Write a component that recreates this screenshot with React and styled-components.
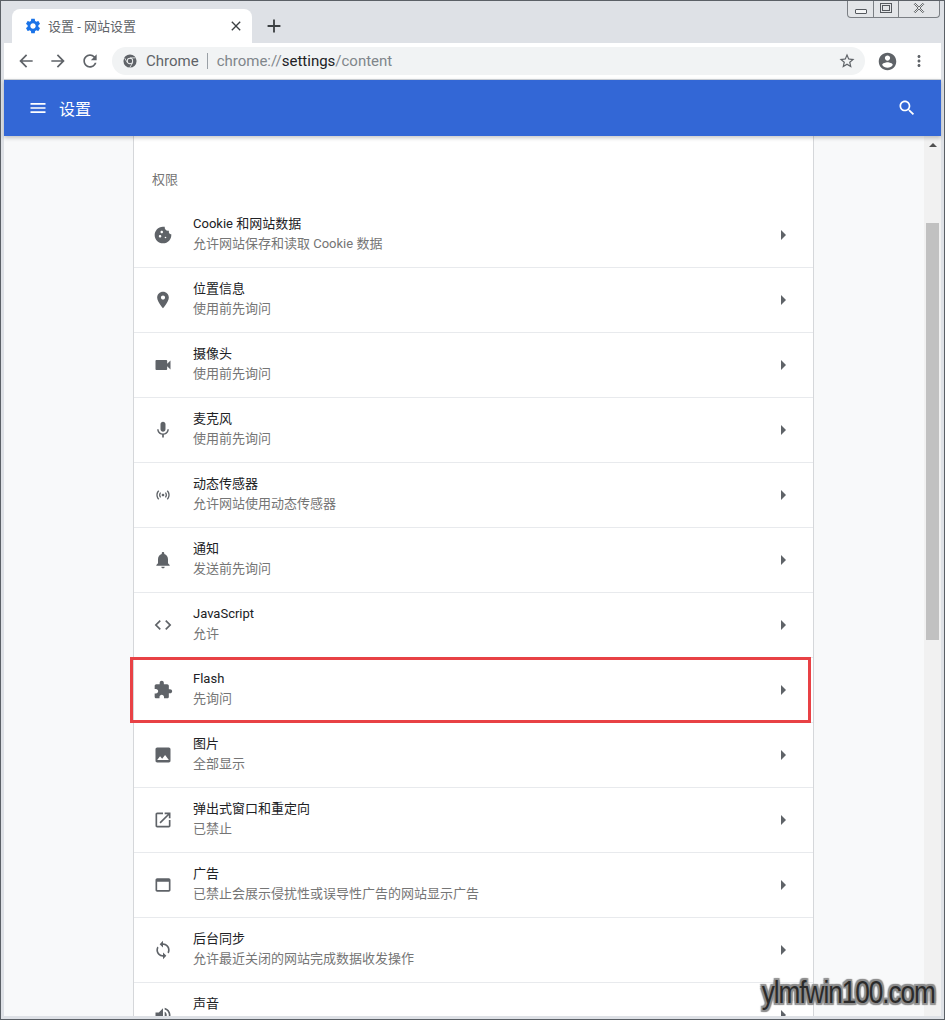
import styled, { createGlobalStyle } from 'styled-components';

const GlobalStyle = createGlobalStyle`
    html, body {
        margin: 0;
        padding: 0;
        background: #ffffff;
    }

    * {
        box-sizing: border-box;
    }
`;

const FONT = `Roboto, "Noto Sans CJK SC", "Liberation Sans", sans-serif`;

const ICONS = {
    gear: 'M19.14 12.94c.04-.3.06-.61.06-.94 0-.32-.02-.64-.07-.94l2.03-1.58c.18-.14.23-.41.12-.61l-1.92-3.32c-.12-.22-.37-.29-.59-.22l-2.39.96c-.5-.38-1.03-.7-1.62-.94l-.36-2.54c-.04-.24-.24-.41-.48-.41h-3.84c-.24 0-.43.17-.47.41l-.36 2.54c-.59.24-1.13.57-1.62.94l-2.39-.96c-.22-.08-.47 0-.59.22L2.74 8.87c-.12.21-.08.47.12.61l2.03 1.58c-.05.3-.09.63-.09.94s.02.64.07.94l-2.03 1.58c-.18.14-.23.41-.12.61l1.92 3.32c.12.22.37.29.59.22l2.39-.96c.5.38 1.03.7 1.62.94l.36 2.54c.05.24.24.41.48.41h3.84c.24 0 .44-.17.47-.41l.36-2.54c.59-.24 1.13-.56 1.62-.94l2.39.96c.22.08.47 0 .59-.22l1.92-3.32c.12-.22.07-.47-.12-.61l-2.01-1.58zM12 15.6c-1.98 0-3.6-1.62-3.6-3.6s1.62-3.6 3.6-3.6 3.6 1.62 3.6 3.6-1.62 3.6-3.6 3.6z',
    close: 'M19 6.41L17.59 5 12 10.59 6.41 5 5 6.41 10.59 12 5 17.59 6.41 19 12 13.41 17.59 19 19 17.59 13.41 12z',
    add: 'M19 13h-6v6h-2v-6H5v-2h6V5h2v6h6v2z',
    back: 'M20 11H7.83l5.59-5.59L12 4l-8 8 8 8 1.41-1.41L7.83 13H20v-2z',
    forward: 'M12 4l-1.41 1.41L16.17 11H4v2h12.17l-5.58 5.59L12 20l8-8z',
    reload: 'M17.65 6.35C16.2 4.9 14.21 4 12 4c-4.42 0-7.99 3.58-7.99 8s3.57 8 7.99 8c3.73 0 6.84-2.55 7.73-6h-2.08c-.82 2.33-3.04 4-5.65 4-3.31 0-6-2.69-6-6s2.69-6 6-6c1.66 0 3.14.69 4.22 1.78L13 11h7V4l-2.35 2.35z',
    star: 'M22 9.24l-7.19-.62L12 2 9.19 8.63 2 9.24l5.46 4.73L5.82 21 12 17.27 18.18 21l-1.63-7.03L22 9.24zM12 15.4l-3.76 2.27 1-4.28-3.32-2.88 4.38-.38L12 6.1l1.71 4.04 4.38.38-3.32 2.88 1 4.28L12 15.4z',
    account: 'M12 2C6.48 2 2 6.48 2 12s4.48 10 10 10 10-4.48 10-10S17.52 2 12 2zm0 3c1.66 0 3 1.34 3 3s-1.34 3-3 3-3-1.34-3-3 1.34-3 3-3zm0 14.2c-2.5 0-4.71-1.28-6-3.22.03-1.99 4-3.08 6-3.08 1.99 0 5.97 1.09 6 3.08-1.29 1.94-3.5 3.22-6 3.22z',
    more: 'M12 8c1.1 0 2-.9 2-2s-.9-2-2-2-2 .9-2 2 .9 2 2 2zm0 2c-1.1 0-2 .9-2 2s.9 2 2 2 2-.9 2-2-.9-2-2-2zm0 6c-1.1 0-2 .9-2 2s.9 2 2 2 2-.9 2-2-.9-2-2-2z',
    menu: 'M3 18h18v-2H3v2zm0-5h18v-2H3v2zm0-7v2h18V6H3z',
    search: 'M15.5 14h-.79l-.28-.27C15.41 12.59 16 11.11 16 9.5 16 5.91 13.09 3 9.5 3S3 5.91 3 9.5 5.91 16 9.5 16c1.61 0 3.09-.59 4.23-1.57l.27.28v.79l5 4.99L20.49 19l-4.99-5zm-6 0C7.01 14 5 11.99 5 9.5S7.01 5 9.5 5 14 7.01 14 9.5 11.99 14 9.5 14z',
    arrow: 'M10 17l5-5-5-5v10z',
    cookie: 'M21.95 10.99c-1.79-.03-3.7-1.95-2.68-4.22-2.97 1-5.78-1.59-5.19-4.56C7.11.74 2 6.41 2 12c0 5.52 4.48 10 10 10 5.89 0 10.54-5.08 9.95-11.01zM8.5 15c-.83 0-1.5-.67-1.5-1.5S7.67 12 8.5 12s1.5.67 1.5 1.5S9.33 15 8.5 15zm2-5C9.67 10 9 9.33 9 8.5S9.67 7 10.5 7s1.5.67 1.5 1.5-.67 1.5-1.5 1.5zm4.5 6c-.55 0-1-.45-1-1s.45-1 1-1 1 .45 1 1-.45 1-1 1z',
    location: 'M12 2C8.13 2 5 5.13 5 9c0 5.25 7 13 7 13s7-7.75 7-13c0-3.87-3.13-7-7-7zm0 9.5c-1.38 0-2.5-1.12-2.5-2.5s1.12-2.5 2.5-2.5 2.5 1.12 2.5 2.5-1.12 2.5-2.5 2.5z',
    camera: 'M17 10.5V7c0-.55-.45-1-1-1H4c-.55 0-1 .45-1 1v10c0 .55.45 1 1 1h12c.55 0 1-.45 1-1v-3.5l4 4v-11l-4 4z',
    mic: 'M12 14c1.66 0 2.99-1.34 2.99-3L15 5c0-1.66-1.34-3-3-3S9 3.34 9 5v6c0 1.66 1.34 3 3 3zm5.3-3c0 3-2.54 5.1-5.3 5.1S6.7 14 6.7 11H5c0 3.41 2.72 6.23 6 6.72V21h2v-3.28c3.28-.48 6-3.3 6-6.72h-1.7z',
    sensors: 'M7.76 16.24C6.67 15.16 6 13.66 6 12s.67-3.16 1.76-4.24l1.42 1.42C8.45 9.9 8 10.9 8 12c0 1.1.45 2.1 1.17 2.83l-1.41 1.41zm8.48 0C17.33 15.16 18 13.66 18 12s-.67-3.16-1.76-4.24l-1.42 1.42C15.55 9.9 16 10.9 16 12c0 1.1-.45 2.1-1.17 2.83l1.41 1.41zM12 10c-1.1 0-2 .9-2 2s.9 2 2 2 2-.9 2-2-.9-2-2-2zm8 2c0 2.21-.9 4.21-2.35 5.65l1.42 1.42C20.88 17.26 22 14.76 22 12s-1.12-5.26-2.93-7.07l-1.42 1.42C19.1 7.79 20 9.79 20 12zM6.35 6.35L4.93 4.93C3.12 6.74 2 9.24 2 12s1.12 5.26 2.93 7.07l1.42-1.42C4.9 16.21 4 14.21 4 12s.9-4.21 2.35-5.65z',
    bell: 'M12 22c1.1 0 2-.9 2-2h-4c0 1.1.89 2 2 2zm6-6v-5c0-3.07-1.64-5.64-4.5-6.32V4c0-.83-.67-1.5-1.5-1.5s-1.5.67-1.5 1.5v.68C7.63 5.36 6 7.92 6 11v5l-2 2v1h16v-1l-2-2z',
    code: 'M9.4 16.6L4.8 12l4.6-4.6L8 6l-6 6 6 6 1.4-1.4zm5.2 0l4.6-4.6-4.6-4.6L16 6l6 6-6 6-1.4-1.4z',
    puzzle: 'M20.5 11H19V7c0-1.1-.9-2-2-2h-4V3.5C13 2.12 11.88 1 10.5 1S8 2.12 8 3.5V5H4c-1.1 0-1.99.9-1.99 2v3.8H3.5c1.49 0 2.7 1.21 2.7 2.7s-1.21 2.7-2.7 2.7H2V20c0 1.1.9 2 2 2h3.8v-1.5c0-1.49 1.21-2.7 2.7-2.7 1.49 0 2.7 1.21 2.7 2.7V22H17c1.1 0 2-.9 2-2v-4h1.5c1.38 0 2.5-1.12 2.5-2.5S21.88 11 20.5 11z',
    photo: 'M21 19V5c0-1.1-.9-2-2-2H5c-1.1 0-2 .9-2 2v14c0 1.1.9 2 2 2h14c1.1 0 2-.9 2-2zM8.5 13.5l2.5 3.01L14.5 12l4.5 6H5l3.5-4.5z',
    popup: 'M19 19H5V5h7V3H5c-1.11 0-2 .9-2 2v14c0 1.1.89 2 2 2h14c1.1 0 2-.9 2-2v-7h-2v7zM14 3v2h3.59l-9.83 9.83 1.41 1.41L19 6.41V10h2V3h-7z',
    ads: 'M19 4H5c-1.11 0-2 .9-2 2v12c0 1.1.89 2 2 2h14c1.1 0 2-.9 2-2V6c0-1.1-.89-2-2-2zm0 14H5V8h14v10z',
    sync: 'M12 4V1L8 5l4 4V6c3.31 0 6 2.69 6 6 0 1.01-.25 1.97-.7 2.8l1.46 1.46C19.54 15.03 20 13.57 20 12c0-4.42-3.58-8-8-8zm0 14c-3.31 0-6-2.69-6-6 0-1.01.25-1.97.7-2.8L5.24 7.74C4.46 8.97 4 10.43 4 12c0 4.42 3.58 8 8 8v3l4-4-4-4v3z',
    sound: 'M3 9v6h4l5 5V4L7 9H3zm13.5 3c0-1.77-1.02-3.29-2.5-4.03v8.05c1.48-.73 2.5-2.25 2.5-4.02zM14 3.23v2.06c2.89.86 5 3.54 5 6.71s-2.11 5.85-5 6.71v2.06c4.01-.91 7-4.49 7-8.77 0-4.28-2.99-7.86-7-8.77z',
};

const ROWS = [
    { icon: 'cookie', title: 'Cookie 和网站数据', text: '允许网站保存和读取 Cookie 数据' },
    { icon: 'location', title: '位置信息', text: '使用前先询问' },
    { icon: 'camera', title: '摄像头', text: '使用前先询问' },
    { icon: 'mic', title: '麦克风', text: '使用前先询问' },
    { icon: 'sensors', size: 16, title: '动态传感器', text: '允许网站使用动态传感器' },
    { icon: 'bell', title: '通知', text: '发送前先询问' },
    { icon: 'code', title: 'JavaScript', text: '允许' },
    { icon: 'puzzle', title: 'Flash', text: '先询问', marked: true },
    { icon: 'photo', title: '图片', text: '全部显示' },
    { icon: 'popup', title: '弹出式窗口和重定向', text: '已禁止' },
    { icon: 'ads', title: '广告', text: '已禁止会展示侵扰性或误导性广告的网站显示广告' },
    { icon: 'sync', title: '后台同步', text: '允许最近关闭的网站完成数据收发操作' },
    { icon: 'sound', title: '声音', text: '' },
];

const Window = styled.div`
    position: relative;
    display: flex;
    flex-direction: column;
    width: 945px;
    height: 1020px;
    overflow: hidden;
    padding: 0 3px 3px;
    background: #dee1e6;
    border: 1px solid #5b6066;
    font-family: ${FONT};
`;

const TabStrip = styled.div`
    display: flex;
    flex: none;
    align-items: flex-end;
    height: 42px;
    margin: 0 -3px;
    padding-left: 11px;
`;

const Tab = styled.div`
    display: flex;
    align-items: center;
    width: 240px;
    height: 34px;
    padding: 0 8px 0 12px;
    background: #ffffff;
    border-radius: 8px 8px 0 0;
    color: #5f6368;
    font-size: 13px;
`;

const TabTitle = styled.span`
    flex: 1;
    margin: -2px 0 0 6px;
`;

const NewTab = styled.div`
    display: flex;
    align-items: center;
    justify-content: center;
    width: 28px;
    height: 34px;
    margin-left: 8px;
    color: #3c4043;
`;

const Icon = styled.svg`
    display: block;
    flex: none;
    fill: currentColor;
`;

const WindowControls = styled.div`
    display: flex;
    align-self: flex-start;
    height: 17px;
    margin-left: auto;
    margin-right: 4px;
    background: #e3e5e8;
    border: 1px solid #7b7f84;
    border-top: none;
    border-radius: 0 0 4px 4px;
`;

const WindowButton = styled.div`
    display: flex;
    align-items: center;
    justify-content: center;
    width: ${p => p.$width}px;
    border-left: ${p => (p.$first ? 'none' : '1px solid #7b7f84')};
`;

const MinimizeMark = styled.div`
    width: 12px;
    height: 5px;
    margin-top: 5px;
    background: #f4f5f6;
    border: 1px solid #55595e;
    border-radius: 1px;
`;

const MaximizeMark = styled.div`
    display: flex;
    align-items: center;
    justify-content: center;
    width: 12px;
    height: 10px;
    margin-top: -2px;
    border: 1px solid #55595e;

    &::after {
        content: '';
        width: 6px;
        height: 4px;
        border: 1px solid #55595e;
    }
`;

const CloseMark = styled.svg`
    display: block;
    margin-top: -2px;
    fill: #f4f5f6;
    stroke: #3c4043;
    stroke-width: 1.2;
`;

const Toolbar = styled.div`
    display: flex;
    flex: none;
    align-items: center;
    height: 36px;
    padding: 0 6px 0 6px;
    background: #ffffff;
    color: #5f6368;
`;

const ToolButton = styled.div`
    display: flex;
    align-items: center;
    justify-content: center;
    width: ${p => p.$width || 32}px;
`;

const Omnibox = styled.div`
    display: flex;
    flex: 1;
    align-items: center;
    height: 28px;
    margin-left: 6px;
    margin-right: 6px;
    padding: 0 9px 0 11px;
    background: #f1f3f4;
    border-radius: 14px;
    font-size: 15px;
    white-space: nowrap;
`;

const SiteName = styled.span`
    margin-left: 9px;
    color: #5f6368;
`;

const Divider = styled.span`
    width: 1px;
    height: 16px;
    margin: 0 9px 0 8px;
    background: #9aa0a6;
`;

const Url = styled.span`
    flex: 1;
    color: #80868b;

    b {
        color: #202124;
        font-weight: 400;
    }
`;

const Header = styled.header`
    position: relative;
    z-index: 2;
    display: flex;
    flex: none;
    align-items: center;
    height: 57px;
    padding: 0 24px 0 24px;
    background: #3367d6;
    border-top: 1px solid #c8ccd1;
    box-shadow: 0 2px 4px rgba(0, 0, 0, 0.22);
    color: #ffffff;
`;

const HeaderTitle = styled.h1`
    flex: 1;
    margin: 0 0 0 11px;
    font-size: 16px;
    font-weight: 400;
`;

const Body = styled.div`
    display: flex;
    flex: 1;
    min-height: 0;
    background: #f8f9fa;
`;

const Content = styled.main`
    flex: 1;
    min-width: 0;
    overflow: hidden;
    padding-left: 129px;
`;

const Card = styled.section`
    width: 681px;
    background: #ffffff;
    border-left: 1px solid #d5d7da;
    border-right: 1px solid #d5d7da;
`;

const SectionLabel = styled.h2`
    display: flex;
    align-items: center;
    height: 67px;
    margin: 0;
    padding: 18px 0 0 18px;
    color: #757575;
    font-size: 13px;
    font-weight: 400;
`;

const Row = styled.div`
    position: relative;
    display: flex;
    align-items: center;
    height: 65px;
    padding-right: 18px;
    border-bottom: 1px solid #e8eaed;
    color: #5f6368;

    ${p => p.$marked && `
        &::after {
            content: '';
            position: absolute;
            top: -1px;
            left: -4px;
            right: 2px;
            bottom: -1px;
            border: 3px solid #e84145;
        }
    `}
`;

const RowIcon = styled.div`
    display: flex;
    flex: none;
    align-items: center;
    justify-content: center;
    width: 58px;
    margin-right: 1px;
`;

const RowText = styled.div`
    flex: 1;
    min-width: 0;
    margin-top: -2px;
    font-size: 13px;
    line-height: 20px;
`;

const RowTitle = styled.div`
    color: #202124;
`;

const RowSub = styled.div`
    min-height: 20px;
    color: #757575;
`;

const Scrollbar = styled.div`
    display: flex;
    flex: none;
    flex-direction: column;
    width: 17px;
    background: #f1f1f1;
`;

const ScrollArrow = styled.div`
    flex: none;
    height: 87px;

    &::before {
        content: '';
        display: block;
        width: 0;
        height: 0;
        margin: 7px auto 0;
        border-left: 4px solid transparent;
        border-right: 4px solid transparent;
        border-bottom: 4px solid #505050;
    }
`;

const ScrollThumb = styled.div`
    width: 13px;
    height: 417px;
    margin: 0 2px;
    background: #c1c1c1;
`;

const Watermark = styled.div`
    position: absolute;
    right: 9px;
    bottom: 8px;
    z-index: 3;
    color: #2b2b2b;
    font-family: "Liberation Sans", sans-serif;
    font-size: 31px;
    line-height: 36px;
    letter-spacing: -1.25px;
    white-space: nowrap;
    transform: scaleX(0.845);
    transform-origin: right center;
    text-shadow:
        -2px 0 1px #8d8d8d, 2px 0 1px #8d8d8d, 0 -2px 1px #8d8d8d, 0 2px 1px #8d8d8d,
        -2px -2px 1px #8d8d8d, 2px 2px 1px #8d8d8d, -2px 2px 1px #8d8d8d, 2px -2px 1px #8d8d8d;
`;

const Glyph = ({ name, size = 24, color }) => (
    <Icon viewBox="0 0 24 24" width={size} height={size} style={color ? { color } : undefined}>
        <path d={ICONS[name]} />
    </Icon>
);

const ChromeLogo = () => (
    <Icon viewBox="0 0 16 16" width={14} height={14}>
        <circle cx="8" cy="8" r="7.5" fill="#5f6368" />
        <circle cx="8" cy="8" r="3.6" fill="#f1f3f4" />
        <circle cx="8" cy="8" r="2.6" fill="#5f6368" />
        <path d="M8 4.4h6.4M5 10l-3-5.2M11 10l-3.2 5.4" stroke="#f1f3f4" strokeWidth="0.9" fill="none" />
    </Icon>
);

const SettingRow = ({ icon, size = 20, title, text, marked }) => (
    <Row $marked={marked}>
        <RowIcon>
            <Glyph name={icon} size={size} />
        </RowIcon>
        <RowText>
            <RowTitle>{title}</RowTitle>
            <RowSub>{text}</RowSub>
        </RowText>
        <Glyph name="arrow" size={24} />
    </Row>
);

const App = () => (
    <>
        <GlobalStyle />
        <Window>
            <TabStrip>
                <Tab>
                    <Glyph name="gear" size={18} color="#1a73e8" />
                    <TabTitle>设置 - 网站设置</TabTitle>
                    <Glyph name="close" size={16} color="#3c4043" />
                </Tab>
                <NewTab>
                    <Glyph name="add" size={22} />
                </NewTab>
                <WindowControls>
                    <WindowButton $width={25} $first>
                        <MinimizeMark />
                    </WindowButton>
                    <WindowButton $width={25}>
                        <MaximizeMark />
                    </WindowButton>
                    <WindowButton $width={41}>
                        <CloseMark viewBox="0 0 24 24" width={16} height={16}>
                            <path d={ICONS.close} />
                        </CloseMark>
                    </WindowButton>
                </WindowControls>
            </TabStrip>

            <Toolbar>
                <ToolButton><Glyph name="back" size={20} /></ToolButton>
                <ToolButton><Glyph name="forward" size={20} /></ToolButton>
                <ToolButton><Glyph name="reload" size={20} /></ToolButton>
                <Omnibox>
                    <ChromeLogo />
                    <SiteName>Chrome</SiteName>
                    <Divider />
                    <Url>chrome://<b>settings</b>/content</Url>
                    <Glyph name="star" size={18} />
                </Omnibox>
                <ToolButton $width={32}><Glyph name="account" size={21} /></ToolButton>
                <ToolButton $width={32}><Glyph name="more" size={18} /></ToolButton>
            </Toolbar>

            <Header>
                <Glyph name="menu" size={20} />
                <HeaderTitle>设置</HeaderTitle>
                <Glyph name="search" size={20} />
            </Header>

            <Body>
                <Content>
                    <Card>
                        <SectionLabel>权限</SectionLabel>
                        {ROWS.map(row => (
                            <SettingRow key={row.title} {...row} />
                        ))}
                    </Card>
                </Content>
                <Scrollbar>
                    <ScrollArrow />
                    <ScrollThumb />
                </Scrollbar>
            </Body>

            <Watermark>ylmfwin100.com</Watermark>
        </Window>
    </>
);

export default App;
